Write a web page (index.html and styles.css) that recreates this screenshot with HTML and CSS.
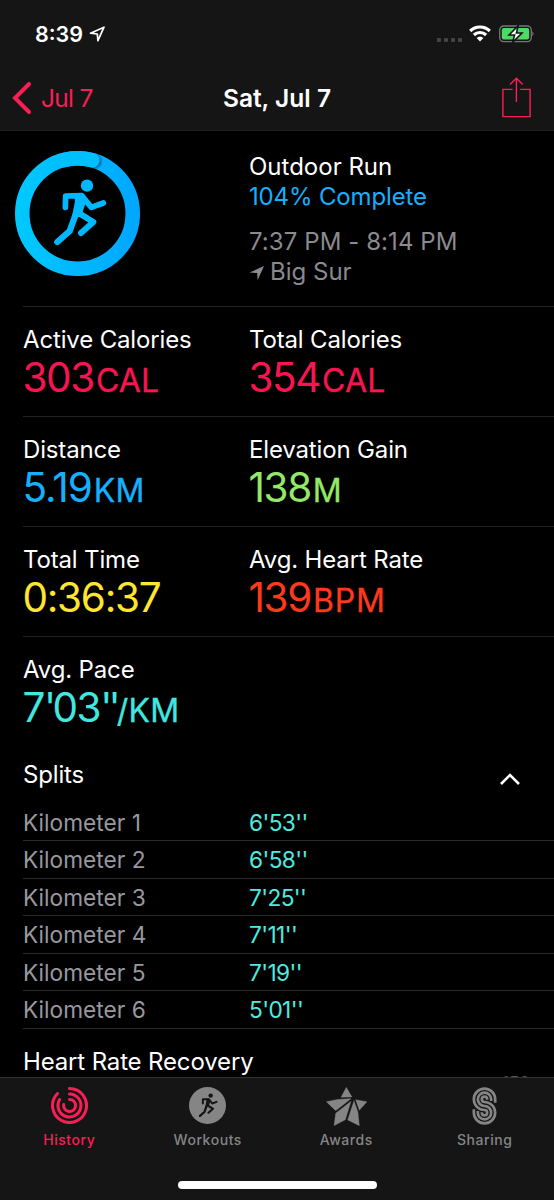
FILE: index.html
```html
<!DOCTYPE html>
<html lang="en">
<head>
<meta charset="utf-8">
<title>Workout</title>
<link rel="stylesheet" href="styles.css">
</head>
<body>
<svg class="defs" aria-hidden="true">
  <symbol id="runner" viewBox="160 114 162 206">
    <g fill="none" stroke="currentColor" stroke-width="17" stroke-linecap="round" stroke-linejoin="round">
      <path d="M196 202l1-34 48-1 29 35 36-13"/>
      <path stroke-width="19" d="M226 226l-17 47-37 33"/>
      <path stroke-width="18" d="M238 220l42 26-37 33"/>
    </g>
    <path d="M222 162l30 0 8 18-17 50-28 4 10-50z" fill="currentColor"/>
    <circle cx="261" cy="137" r="18.500" fill="currentColor"/>
  </symbol>
</svg>
<div class="screen">
  <header class="top">
    <div class="status">
      <div class="clock"><span>8:39</span>
        <svg width="17" height="16" viewBox="0 0 17 16"><path d="M1.500 7.200L15 1.200 8.900 14.700 8.300 8z" fill="none" stroke="#fff" stroke-width="1.700" stroke-linejoin="round"/></svg>
      </div>
      <div class="signals">
        <span class="dots"><i></i><i></i><i></i><i></i></span>
        <svg width="22" height="17" viewBox="0 0 22 17"><g fill="none" stroke="#fff" stroke-width="3.200"><path d="M1.200 6a14 14 0 0 1 19.600 0"/><path d="M4.900 10a8.700 8.700 0 0 1 12.200 0"/></g><path d="M11 16.400l-3.400-3.300a5 5 0 0 1 6.800 0z" fill="#fff"/></svg>
        <svg class="battery" width="36" height="18" viewBox="0 0 36 18"><rect x=".7" y="1" width="31.600" height="15.600" rx="4" fill="none" stroke="#777" stroke-width="1.300"/><rect x="2.800" y="3" width="27.400" height="11.600" rx="2" fill="#4cd964"/><path d="M33.400 6.400a3 3 0 0 1 0 4.800z" fill="#777"/><path d="M19.200.6L10 10h5.600l-2 7.400L23 8h-5.600z" fill="#fff" stroke="#151515" stroke-width="1.600"/></svg>
      </div>
    </div>
    <nav class="nav">
      <a class="back"><svg width="20" height="32" viewBox="0 0 20 32"><path d="M17 2L3 16l14 14" fill="none" stroke="#fa1e55" stroke-width="4" stroke-linecap="round"/></svg><span>Jul 7</span></a>
      <h1>Sat, Jul 7</h1>
      <svg class="share" width="29" height="41" viewBox="0 0 29 41"><g fill="none" stroke="#fa1e55" stroke-width="1.400"><path d="M10.600 12.400H.9V39.600H28.100V12.400H18.200"/><path d="M14.400 25V1.400M8 7.600l6.400-6.400 6.400 6.400"/></g></svg>
    </nav>
  </header>
  <main class="content">
    <section class="summary">
      <svg width="125" height="125" viewBox="45 33 375 375">
        <defs>
          <linearGradient id="blue" x1="0" x2="1"><stop offset="0" stop-color="#00c8ff"/><stop offset="1" stop-color="#00a8ff"/></linearGradient>
          <radialGradient id="shade"><stop offset=".5" stop-color="#004a80" stop-opacity=".9"/><stop offset="1" stop-color="#004a80" stop-opacity="0"/></radialGradient>
          <clipPath id="band"><path clip-rule="evenodd" d="M45 220.500a187.500 187.500 0 0 1 375 0a187.500 187.500 0 0 1-375 0zM88.500 220.500a144 144 0 0 0 288 0a144 144 0 0 0-288 0z"/></clipPath>
        </defs>
        <circle cx="232.500" cy="220.500" r="165.700" fill="none" stroke="url(#blue)" stroke-width="43.600"/>
        <circle cx="283" cy="64" r="27" fill="url(#shade)" clip-path="url(#band)"/>
        <path d="M190 60.500A165.700 165.700 0 0 1 277 61" fill="none" stroke="#00bfff" stroke-width="43.600" stroke-linecap="round"/>
        <svg x="160" y="114" width="162" height="206" color="#00b8ff"><use href="#runner"/></svg>
      </svg>
      <div class="info">
        <p class="t">Outdoor Run</p>
        <p class="t blue complete">104% Complete</p>
        <p class="t grey gap">7:37 PM - 8:14 PM</p>
        <p class="t grey place"><svg width="16" height="16" viewBox="0 0 16 16"><path d="M.5 7.600L15 1 8.600 15.300 8.200 8.100z" fill="currentColor"/></svg><span>Big Sur</span></p>
      </div>
    </section>
    <section class="metrics">
      <div class="row">
        <div><p class="t">Active Calories</p><p class="v pink"><b>303</b><small>CAL</small></p></div>
        <div><p class="t">Total Calories</p><p class="v pink"><b>354</b><small>CAL</small></p></div>
      </div>
      <div class="row">
        <div><p class="t">Distance</p><p class="v blue"><b class="decimal">5.19</b><small>KM</small></p></div>
        <div><p class="t">Elevation Gain</p><p class="v green"><b>138</b><small>M</small></p></div>
      </div>
      <div class="row">
        <div><p class="t">Total Time</p><p class="v yellow"><b class="time">0:36:37</b></p></div>
        <div><p class="t">Avg. Heart Rate</p><p class="v red"><b>139</b><small>BPM</small></p></div>
      </div>
      <div class="row">
        <div><p class="t">Avg. Pace</p><p class="v teal"><b>7<i>'</i>03<i>''</i></b><small class="per">/KM</small></p></div>
      </div>
    </section>
    <section class="splits">
      <div class="head"><h2 class="t">Splits</h2><svg width="22" height="14" viewBox="0 0 22 14"><path d="M2 12l9-9 9 9" fill="none" stroke="#fff" stroke-width="2.600"/></svg></div>
      <div class="km"><span>Kilometer 1</span><b>6'53''</b></div>
      <div class="km"><span>Kilometer 2</span><b>6'58''</b></div>
      <div class="km"><span>Kilometer 3</span><b>7'25''</b></div>
      <div class="km"><span>Kilometer 4</span><b>7'11''</b></div>
      <div class="km"><span>Kilometer 5</span><b>7'19''</b></div>
      <div class="km"><span>Kilometer 6</span><b>5'01''</b></div>
    </section>
    <section class="recovery"><h2 class="t">Heart Rate Recovery</h2><span class="axis">150</span></section>
  </main>
  <footer class="tabs">
    <a class="tab active"><svg width="37" height="37" viewBox="-55.500 -55.500 111 111"><g fill="none" stroke="currentColor" stroke-width="9" stroke-linecap="round"><path d="M0 -51A51 51 0 1 1 -36 -36"/><path d="M0 -34.500A34.500 34.500 0 1 1 -29.500 -18"/><path d="M0 -18A18 18 0 1 1 -17.500 -3"/></g></svg><span>History</span></a>
    <a class="tab"><svg width="37" height="37" viewBox="0 0 37 37"><circle cx="18.500" cy="18.500" r="18.500" fill="currentColor"/><svg x="9.500" y="4.500" width="19.500" height="27.500" color="#151515"><use href="#runner"/></svg></svg><span>Workouts</span></a>
    <a class="tab"><svg width="41" height="39" viewBox="147 139 123 117"><path fill="currentColor" stroke="currentColor" stroke-linejoin="round" d="M208 140l17 29-33 1zM148 183q36-10 74-9l-46 36zM236 177l34 6-23 26zM222 182l-17 55-34 18 5-37zM231 180l12 35 4 40-35-17z"/></svg><span>Awards</span></a>
    <a class="tab"><svg width="25" height="38" viewBox="587 139 74 114"><g fill="none" stroke="currentColor" stroke-width="8"><path d="M656 186V176A32 32 0 1 0 624 208A8 8 0 1 1 616 216V215"/><path d="M644 181V176A20 20 0 1 0 624 196A20 20 0 1 1 604 216V211"/><path d="M632 177V176A8 8 0 1 0 624 184A32 32 0 1 1 592 216V206"/></g></svg><span>Sharing</span></a>
    <i class="home"></i>
  </footer>
</div>
</body>
</html>
```
FILE: styles.css
```css
* { box-sizing: border-box; margin: 0; padding: 0; }
body { width: 554px; height: 1200px; overflow: hidden; background: #000; color: #fff; font-family: Inter, "Open Sans", sans-serif; }
svg { display: block; flex: none; }
.defs { position: absolute; width: 0; height: 0; }
.screen { height: 1200px; display: flex; flex-direction: column; }

.top { height: 131px; background: #151515; border-bottom: 1px solid #1f1f1f; flex: none; }
.status { height: 66px; padding: 20px 19px 0 35px; display: flex; justify-content: space-between; }
.clock { display: flex; gap: 6px; font-weight: 600; font-size: 21.500px; line-height: 29px; }
.clock svg { margin-top: 6px; }
.signals { display: flex; gap: 7px; padding-top: 5px; }
.dots { display: flex; gap: 2.700px; padding-top: 12.500px; }
.dots i { width: 4.300px; height: 4.300px; background: #444; border-radius: 1px; }
.battery { margin-left: 1px; }
.nav { display: grid; grid-template-columns: 1fr auto 1fr; align-items: start; padding: 12px 12px 0 12px; font-size: 24.500px; line-height: 40px; }
.back { display: flex; gap: 9px; color: #fa1e55; letter-spacing: -.7px; }
.back svg { margin-top: 4px; }
.nav h1 { font-size: 24.500px; font-weight: 600; }
.share { justify-self: end; margin: -1px 11px 0 0; }

.content { height: 946px; overflow: hidden; flex: none; }
.t { font-size: 24px; font-weight: 400; line-height: 30px; white-space: nowrap; letter-spacing: -.15px; }
.summary { height: 175px; padding: 20px 0 0 15px; display: grid; grid-template-columns: 234px 1fr; }
.info { padding-top: 1px; }
.info .t { letter-spacing: 0; }
.info .complete { letter-spacing: -.15px; }
.info .gap { margin-top: 14.500px; letter-spacing: .08px; }
.grey { color: #8a8a8f; }
.place { display: flex; gap: 5px; }
.place svg { margin-top: 8px; }
.metrics { padding-left: 23px; }
.row { height: 110px; border-top: 1px solid #222; padding-top: 18px; display: grid; grid-template-columns: 226px 1fr; }
.v { font-size: 40.500px; line-height: 44px; white-space: nowrap; padding-top: 1px; margin-left: -.5px; }
.v b { font-weight: 400; letter-spacing: -1.400px; }
.v .decimal { letter-spacing: -1px; }
.v .time { letter-spacing: -1.300px; }
.v i { font-style: normal; letter-spacing: -3.800px; }
.v small { font-size: 32px; margin-left: 2px; letter-spacing: .2px; -webkit-text-stroke: .3px; }
.v .per { margin-left: 0; }
.red small { letter-spacing: .8px; }
.pink { color: #fa1452; }
.blue { color: #14b0ff; }
.green { color: #94e868; }
.yellow { color: #ffe62e; }
.red { color: #ff3a1c; }
.teal { color: #3fe8e0; }

.splits { padding-left: 23px; }
.head { height: 57.500px; padding: 14px 33px 0 0; display: flex; justify-content: space-between; }
.head svg { margin-top: 12px; }
.km { height: 37.600px; border-bottom: 1px solid #2a2a2a; display: grid; grid-template-columns: 226px 1fr; font-size: 22.700px; line-height: 38px; color: #98989f; }
.km b { font-weight: 400; color: #4cece0; letter-spacing: -.600px; }
.recovery { padding: 18px 24px 0 23px; display: flex; justify-content: space-between; }
.axis { color: #555; font-size: 17px; line-height: 20px; margin-top: 26px; }

.tabs { flex: 1; background: #151515; border-top: 1px solid #333; display: grid; grid-template-columns: repeat(4, 138.500px); position: relative; }
.tab { display: grid; grid-template-rows: 37px 24px; row-gap: 4px; padding-top: 9px; justify-items: center; align-content: start; color: #858585; font-size: 14px; font-weight: 500; line-height: 24px; letter-spacing: .55px; }
.active { color: #fa1e55; }
.home { position: absolute; left: 178px; top: 103px; width: 199px; height: 8px; border-radius: 4px; background: #fff; }
```
